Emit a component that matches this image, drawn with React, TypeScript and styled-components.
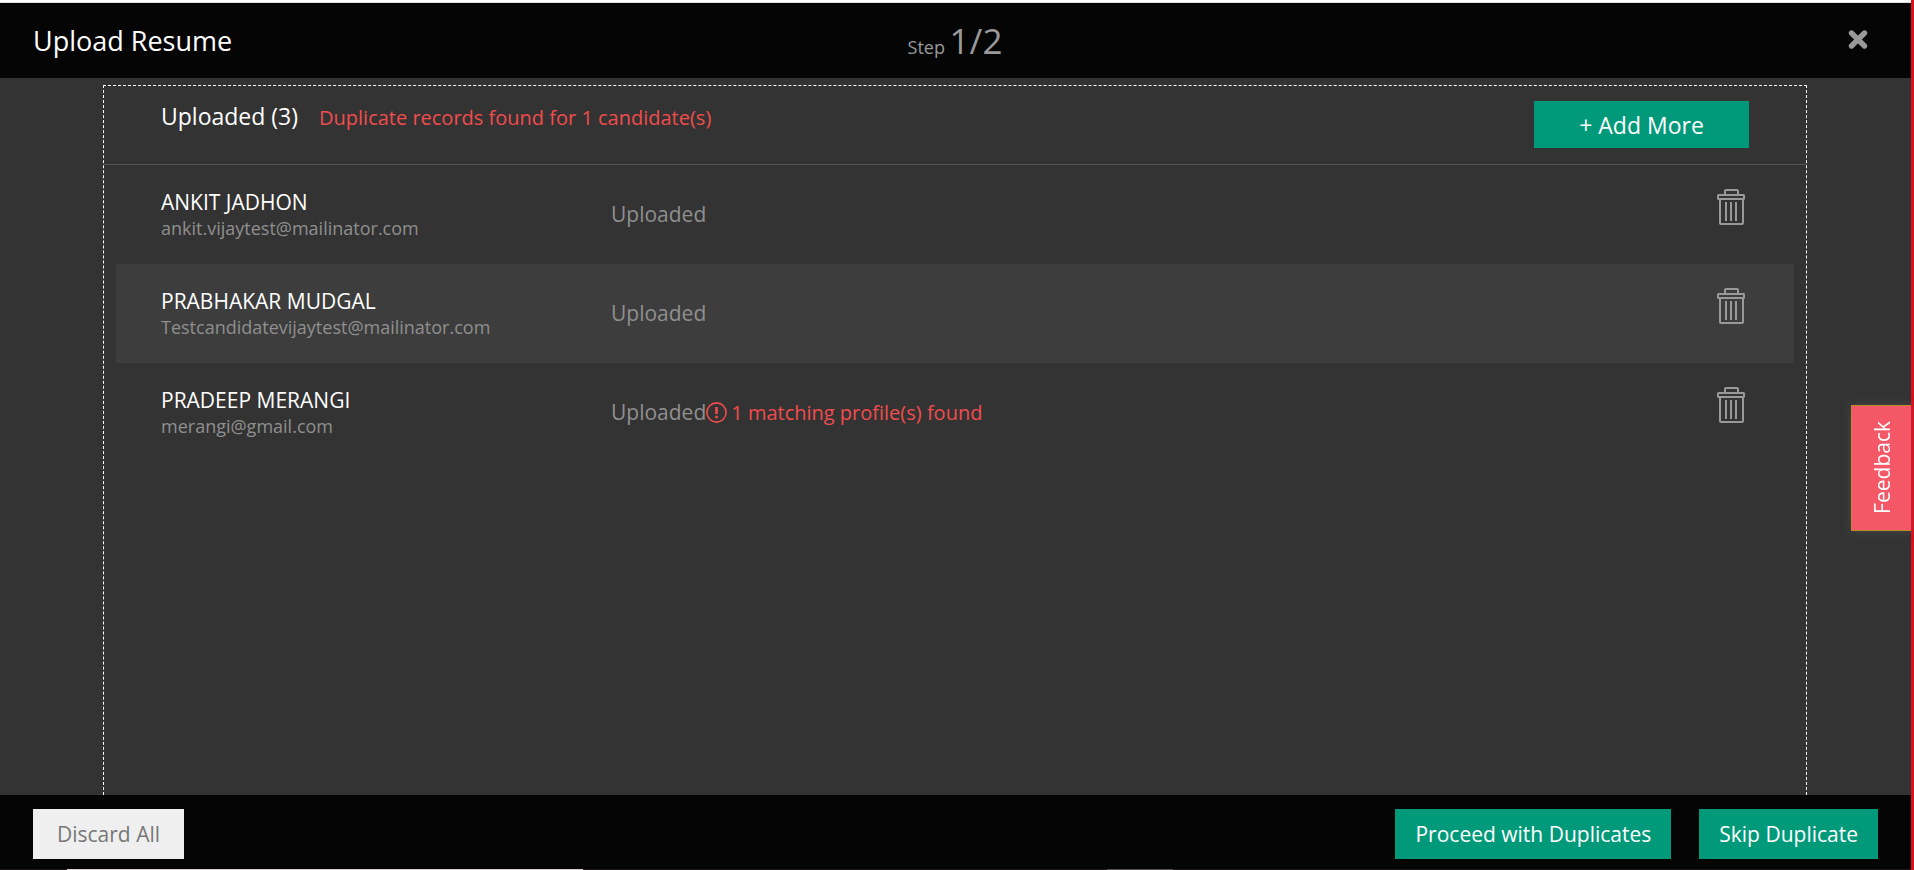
import React from "react";
import styled, { createGlobalStyle } from "styled-components";

const GlobalStyle = createGlobalStyle`
  *, *::before, *::after { box-sizing: border-box; }
  body {
    margin: 0;
    background: #333;
    color: #fff;
    font-family: "Open Sans", "Noto Sans", sans-serif;
  }
  h1, h2, p, ul { margin: 0; padding: 0; font-weight: 400; }
  button { font-family: inherit; cursor: pointer; }
`;

const Page = styled.div`
  display: flex;
  flex-direction: column;
  height: 100vh;
  min-height: 560px;
  border-right: 3px solid #d9101f;
`;

const TopStrip = styled.div`
  flex: none;
  height: 3px;
  background: #fff;
  border-bottom: 1px solid #ddd;
`;

const Header = styled.header`
  flex: none;
  display: grid;
  grid-template-columns: 1fr auto 1fr;
  align-items: center;
  height: 75px;
  padding: 0 40px 0 33px;
  background: #050505;
`;

const Title = styled.h1`
  font-size: 27px;
  line-height: 36px;
`;

const Step = styled.p`
  padding: 6px 0 0 6px;
  color: #999;
  font-size: 18px;
  line-height: 48px;
`;

const StepCount = styled.span`
  font-size: 35px;
`;

const IconButton = styled.button`
  display: flex;
  justify-self: end;
  padding: 0;
  border: 0;
  background: none;
  color: #999;
`;

const Main = styled.main`
  flex: 1;
  min-height: 0;
  display: flex;
  padding: 7px 104px 0 103px;
  overflow: hidden;
`;

const Panel = styled.section`
  flex: 1;
  border: 1px dashed #fff;
  border-bottom: 0;
`;

const PanelHeader = styled.div`
  display: flex;
  align-items: flex-start;
  gap: 21px;
  height: 79px;
  padding: 15px 57px 0;
  border-bottom: 1px solid #555;
`;

const PanelTitle = styled.h2`
  font-size: 23px;
  line-height: 30px;
`;

const Alert = styled.span`
  color: #f14c4e;
  font-size: 20px;
  line-height: 34px;
`;

const Button = styled.button<{ $tone?: "plain"; $size?: "wide" }>`
  height: ${(p) => (p.$size ? 47 : 50)}px;
  width: ${(p) => (p.$size ? "215px" : "auto")};
  margin-left: ${(p) => (p.$size ? "auto" : 0)};
  padding: 0 ${(p) => (p.$tone ? 24 : 20)}px;
  border: 0;
  background: ${(p) => (p.$tone ? "#efefef" : "#009a7a")};
  color: ${(p) => (p.$tone ? "#777" : "#fff")};
  font-size: ${(p) => (p.$size ? 23 : 21)}px;
  line-height: 30px;
`;

const List = styled.ul`
  padding: 0 12px;
  list-style: none;
`;

const Row = styled.li`
  display: grid;
  grid-template-columns: 450px 1fr auto;
  height: 99px;
  padding: 24px 49px 0 45px;

  &:nth-child(even) { background: #3d3d3d; }
`;

const Name = styled.p`
  font-size: 21px;
  line-height: 26px;
`;

const Email = styled.p`
  color: #8f8f8f;
  font-size: 18px;
  line-height: 26px;
`;

const Status = styled.div`
  display: flex;
  align-items: center;
  height: 50px;
  color: #8f8f8f;
  font-size: 21px;
`;

const Match = styled.span`
  display: flex;
  align-items: center;
  gap: 4px;
  color: #f14c4e;
  font-size: 20px;
`;

const Footer = styled.footer`
  flex: none;
  display: flex;
  gap: 28px;
  height: 74px;
  padding: 14px 33px 0;
  background: #050505;
`;

const Spacer = styled.div`
  flex: 1;
`;

const BottomEdge = styled.div`
  flex: none;
  display: flex;
  height: 1px;
  background: #1e1719;
`;

const EdgeMark = styled.div<{ $color: string; $width: number; $gap: number }>`
  width: ${(p) => p.$width}px;
  margin-left: ${(p) => p.$gap}px;
  background: ${(p) => p.$color};
`;

const Feedback = styled.button`
  position: fixed;
  top: 405px;
  right: 3px;
  width: 60px;
  height: 126px;
  padding: 2px 0 0;
  border: 1px solid #c08a28;
  border-right: 0;
  background: #f45765;
  box-shadow: 0 0 10px rgba(130, 130, 130, 0.25);
  color: #fff;
`;

const FeedbackLabel = styled.span`
  display: inline-block;
  writing-mode: vertical-rl;
  transform: rotate(180deg);
  font-size: 21px;
  line-height: 28px;
`;

const CloseIcon = () => (
  <svg width="26" height="26" viewBox="0 0 26 26" aria-hidden="true">
    <path d="M6.500 5 19.500 18M19.500 5 6.500 18" stroke="currentColor" strokeWidth="5.400" strokeLinecap="round" fill="none" />
  </svg>
);

const TrashIcon = () => (
  <svg width="28" height="36" viewBox="0 0 28 36" fill="none" stroke="currentColor" strokeWidth="2" strokeLinejoin="round" aria-hidden="true">
    <path d="M8 5V2Q8 1 9 1H20Q21 1 21 2V5" />
    <rect x="1" y="6" width="26" height="4" rx=".5" />
    <path d="M3 10V34Q3 35 4 35H25Q26 35 26 34V10" />
    <path d="M9 13V32M14 13V32M19 13V32" />
  </svg>
);

const WarningIcon = () => (
  <svg width="21" height="21" viewBox="0 0 21 21" fill="none" stroke="currentColor" aria-hidden="true">
    <circle cx="10.500" cy="10.500" r="9.600" strokeWidth="1.600" />
    <path d="M10.500 5V12" strokeWidth="2.600" />
    <path d="M10.500 13.800V16.200" strokeWidth="2.600" />
  </svg>
);

const candidates = [
  { name: "ANKIT JADHON", email: "ankit.vijaytest@mailinator.com", matches: 0 },
  { name: "PRABHAKAR MUDGAL", email: "Testcandidatevijaytest@mailinator.com", matches: 0 },
  { name: "PRADEEP MERANGI", email: "merangi@gmail.com", matches: 1 },
];

export default function App() {
  return (
    <>
      <GlobalStyle />
      <Page>
        <TopStrip />
        <Header>
          <Title>Upload Resume</Title>
          <Step>
            Step <StepCount>1/2</StepCount>
          </Step>
          <IconButton aria-label="Close">
            <CloseIcon />
          </IconButton>
        </Header>
        <Main>
          <Panel>
            <PanelHeader>
              <PanelTitle>Uploaded (3)</PanelTitle>
              <Alert>Duplicate records found for 1 candidate(s)</Alert>
              <Button $size="wide">+ Add More</Button>
            </PanelHeader>
            <List>
              {candidates.map((c) => (
                <Row key={c.email}>
                  <div>
                    <Name>{c.name}</Name>
                    <Email>{c.email}</Email>
                  </div>
                  <Status>
                    Uploaded
                    {c.matches > 0 && (
                      <Match>
                        <WarningIcon />
                        {`${c.matches} matching profile(s) found`}
                      </Match>
                    )}
                  </Status>
                  <IconButton aria-label={`Delete ${c.name}`}>
                    <TrashIcon />
                  </IconButton>
                </Row>
              ))}
            </List>
          </Panel>
        </Main>
        <Footer>
          <Button $tone="plain">Discard All</Button>
          <Spacer />
          <Button>Proceed with Duplicates</Button>
          <Button>Skip Duplicate</Button>
        </Footer>
        <BottomEdge>
          <EdgeMark $color="#d8cfd1" $width={516} $gap={67} />
          <EdgeMark $color="#554f51" $width={66} $gap={524} />
        </BottomEdge>
      </Page>
      <Feedback>
        <FeedbackLabel>Feedback</FeedbackLabel>
      </Feedback>
    </>
  );
}
